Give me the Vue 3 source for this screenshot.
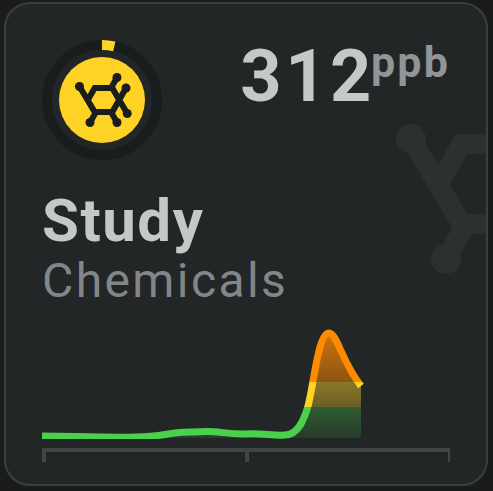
<script setup>
const reading = { value: 312, unit: 'ppb', room: 'Study', kind: 'Chemicals' }

// Share of the ring that is filled, in percent
const level = 3.6

// Molecule drawn on a 24-unit grid
const bonds =
  'M7.27 12L9.57 8H15.43L20.4 16.5M4.5 7.5L9.57 16H15.43L20 8M10 16L8 19.5M15 16L17 19.5M15 8L17 4.5'
const atoms = [
  [4.5, 7.5],
  [17, 4.5],
  [20, 8],
  [20.4, 16.5],
  [17, 19.5],
  [8, 19.5],
]

const curve =
  'M0 128C30 128 60 130 95 129C120 129 128 124 148 124C158 124 166 123 176 124C184 125 190 126 202 126C222 125 230 128 243 127C256 127 262 112 266 98C272 76 276 25 287 25C295 25 300 54 319 78'
</script>

<template>
  <article class="card">
    <svg class="watermark" viewBox="0 0 24 24" aria-hidden="true">
      <path class="bond" :d="bonds" />
      <circle v-for="([x, y], i) in atoms" :key="i" :cx="x" :cy="y" r="1.5" />
    </svg>

    <header class="head">
      <svg class="ring" viewBox="0 0 120 120" aria-hidden="true">
        <circle class="track" cx="60" cy="60" r="55" />
        <circle
          class="level"
          cx="60"
          cy="60"
          r="55"
          pathLength="100"
          :stroke-dasharray="`${level} 100`"
          transform="rotate(-90 60 60)"
        />
        <circle class="disc" cx="60" cy="60" r="43" />
        <g class="molecule" transform="translate(24 24) scale(3)">
          <path class="bond" :d="bonds" />
          <circle v-for="([x, y], i) in atoms" :key="i" :cx="x" :cy="y" r="1.5" />
        </g>
      </svg>
      <p class="value">
        <span>{{ reading.value }}</span><span class="unit">{{ reading.unit }}</span>
      </p>
    </header>

    <h2 class="room">{{ reading.room }}</h2>
    <p class="kind">{{ reading.kind }}</p>

    <svg class="chart" viewBox="0 2 408 152" aria-hidden="true">
      <defs>
        <linearGradient id="bands" gradientUnits="userSpaceOnUse" x1="0" y1="0" x2="0" y2="154">
          <stop offset="0.4805" stop-color="#ff8a00" />
          <stop offset="0.4805" stop-color="#ffd325" />
          <stop offset="0.6429" stop-color="#ffd325" />
          <stop offset="0.6429" stop-color="#4bd04b" />
        </linearGradient>
        <linearGradient id="fade" gradientUnits="userSpaceOnUse" x1="0" y1="22" x2="0" y2="130">
          <stop offset="0" stop-color="#fff" stop-opacity="0.8" />
          <stop offset="1" stop-color="#fff" stop-opacity="0.13" />
        </linearGradient>
        <mask id="fadeMask" maskUnits="userSpaceOnUse" x="0" y="0" width="408" height="130">
          <rect width="408" height="130" fill="url(#fade)" />
        </mask>
        <clipPath id="plot">
          <rect width="408" height="131" />
        </clipPath>
      </defs>
      <path :d="`${curve}V130H0Z`" fill="url(#bands)" mask="url(#fadeMask)" />
      <path class="line" :d="curve" stroke="url(#bands)" clip-path="url(#plot)" />
      <path class="axis" d="M0 142H408M2 142V154M205 142V154" />
      <path class="axis end" d="M407 142V154" />
    </svg>
  </article>
</template>

<style>
body {
  margin: 0;
  background: #191b1d;
}
</style>

<style scoped>
.card {
  position: relative;
  overflow: hidden;
  margin: 2px 5px 5px 4px;
  padding: 36px 36px 22px;
  border: 2px solid #3b3d3f;
  border-radius: 26px;
  background: #222627;
  color: #c4c8c9;
  font-family: Roboto, 'Liberation Sans', sans-serif;
}

.watermark {
  position: absolute;
  top: 60px;
  right: -120px;
  width: 240px;
  height: 240px;
  fill: #2d3031;
  stroke: #2d3031;
}

.watermark circle,
.molecule circle {
  stroke: none;
}

.bond {
  fill: none;
  stroke-width: 2;
}

.head {
  position: relative;
  display: flex;
  justify-content: space-between;
  align-items: flex-start;
  margin-bottom: 30px;
}

.ring {
  flex: none;
  width: 120px;
  height: 120px;
}

.track,
.level {
  fill: none;
  stroke: #1a1d1e;
  stroke-width: 10;
}

.level {
  stroke: #ffd325;
}

.disc {
  fill: #ffd325;
}

.molecule {
  fill: #1a1d1e;
  stroke: #1a1d1e;
}

.value {
  display: flex;
  align-items: flex-start;
  margin: 0;
  font-size: 72px;
  font-weight: 700;
  line-height: 74px;
  letter-spacing: 0.05em;
}

.unit {
  margin-left: -4px;
  color: #919596;
  font-size: 43px;
  line-height: 44px;
  letter-spacing: 0.05em;
}

.room {
  position: relative;
  margin: 0;
  font-size: 60px;
  font-weight: 700;
  line-height: 62px;
  letter-spacing: 0.025em;
}

.kind {
  position: relative;
  margin: 0;
  color: #828687;
  font-size: 48px;
  line-height: 58px;
  letter-spacing: 0.05em;
}

.chart {
  position: relative;
  display: block;
  width: 100%;
  height: auto;
}

.line {
  fill: none;
  stroke-width: 7;
}

.axis {
  fill: none;
  stroke: #424546;
  stroke-width: 4;
}

.end {
  stroke-width: 2;
}
</style>
